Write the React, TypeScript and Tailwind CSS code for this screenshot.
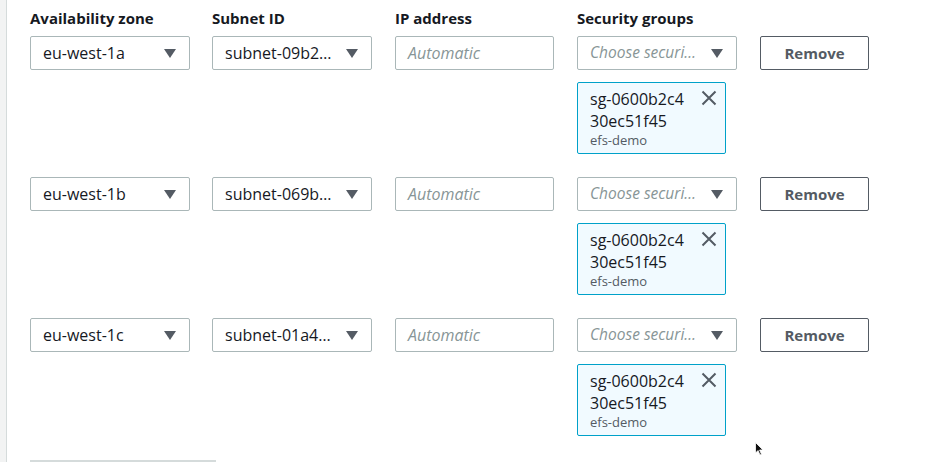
import React from 'react';

type Row = { zone: string; subnet: string };

const rows: Row[] = [
  { zone: 'eu-west-1a', subnet: 'subnet-09b2…' },
  { zone: 'eu-west-1b', subnet: 'subnet-069b…' },
  { zone: 'eu-west-1c', subnet: 'subnet-01a4…' },
];

const Caret: React.FC = () => (
  <svg width="12" height="9" viewBox="0 0 12 9" className="shrink-0">
    <path d="M0 0 H12 L6 9 Z" fill="#545b64" />
  </svg>
);

const Select: React.FC<{ value: string; placeholder?: boolean }> = ({ value, placeholder }) => (
  <div className="flex h-[34px] w-[160px] items-center justify-between gap-[4px] rounded-[2px] border border-[#aab7b8] bg-white pl-[12px] pr-[13px]">
    <span
      className={
        placeholder
          ? 'truncate text-[15.5px] italic text-[#879596]'
          : 'truncate text-[16px] text-[#16191f]'
      }
    >
      {value}
    </span>
    <Caret />
  </div>
);

const Token: React.FC = () => (
  <div className="relative h-[72px] w-[149px] rounded-[2px] border border-[#00a1c9] bg-[#f1faff] pl-[12px] pt-[5px]">
    <div className="text-[16px] leading-[22px] text-[#16191f]">sg-0600b2c4</div>
    <div className="text-[16px] leading-[22px] text-[#16191f]">30ec51f45</div>
    <div className="text-[13px] leading-[16px] text-[#545b64]">efs-demo</div>
    <svg width="16" height="16" viewBox="0 0 16 16" className="absolute right-[8px] top-[7px]">
      <path d="M1.5 1.5 L14.5 14.5 M14.5 1.5 L1.5 14.5" stroke="#545b64" strokeWidth="2" />
    </svg>
  </div>
);

const App: React.FC = () => {
  return (
    <div
      className="relative h-[462px] w-[936px] overflow-hidden bg-white"
      style={{ fontFamily: '"Open Sans", "Noto Sans", sans-serif' }}
    >
      <div className="absolute left-0 top-0 h-full w-[6px] bg-[#f2f3f3]" />
      <div className="absolute left-[6px] top-0 h-full w-[1px] bg-[#d5dbdb]" />

      <div className="pl-[30px] pt-[8px]">
        <div className="grid grid-cols-[182px_183px_182px_183px_109px]">
          <div className="text-[15px] font-bold leading-[20px] text-[#16191f]">Availability zone</div>
          <div className="text-[15px] font-bold leading-[20px] text-[#16191f]">Subnet ID</div>
          <div className="text-[15px] font-bold leading-[20px] text-[#16191f]">IP address</div>
          <div className="text-[15px] font-bold leading-[20px] text-[#16191f]">Security groups</div>
          <div />
        </div>

        <div className="mt-[8px] flex flex-col gap-[23px]">
          {rows.map((r) => (
            <div key={r.zone} className="grid grid-cols-[182px_183px_182px_183px_109px]">
              <Select value={r.zone} />
              <Select value={r.subnet} />
              <div className="flex h-[34px] w-[159px] items-center rounded-[2px] border border-[#aab7b8] bg-white pl-[12px]">
                <span className="text-[16px] italic text-[#879596]">Automatic</span>
              </div>
              <div className="flex flex-col gap-[12px]">
                <Select value="Choose securi…" placeholder />
                <Token />
              </div>
              <button className="flex h-[34px] w-[109px] items-center justify-center rounded-[2px] border border-[#545b64] bg-white text-[15px] font-bold text-[#545b64]">
                Remove
              </button>
            </div>
          ))}
        </div>

        <div className="mt-[24px] h-[10px] w-[186px] border-t-2 border-[#d5dbdb]" />
      </div>

      <svg width="10" height="14" viewBox="0 0 10 14" className="absolute left-[755px] top-[442px]">
        <path d="M0.5 0.5 L0.5 11 L3 8.5 L5 13 L6.5 12.3 L4.6 8 L8 8 Z" fill="#111" stroke="#fff" strokeWidth="0.8" />
      </svg>
    </div>
  );
};

export default App;
